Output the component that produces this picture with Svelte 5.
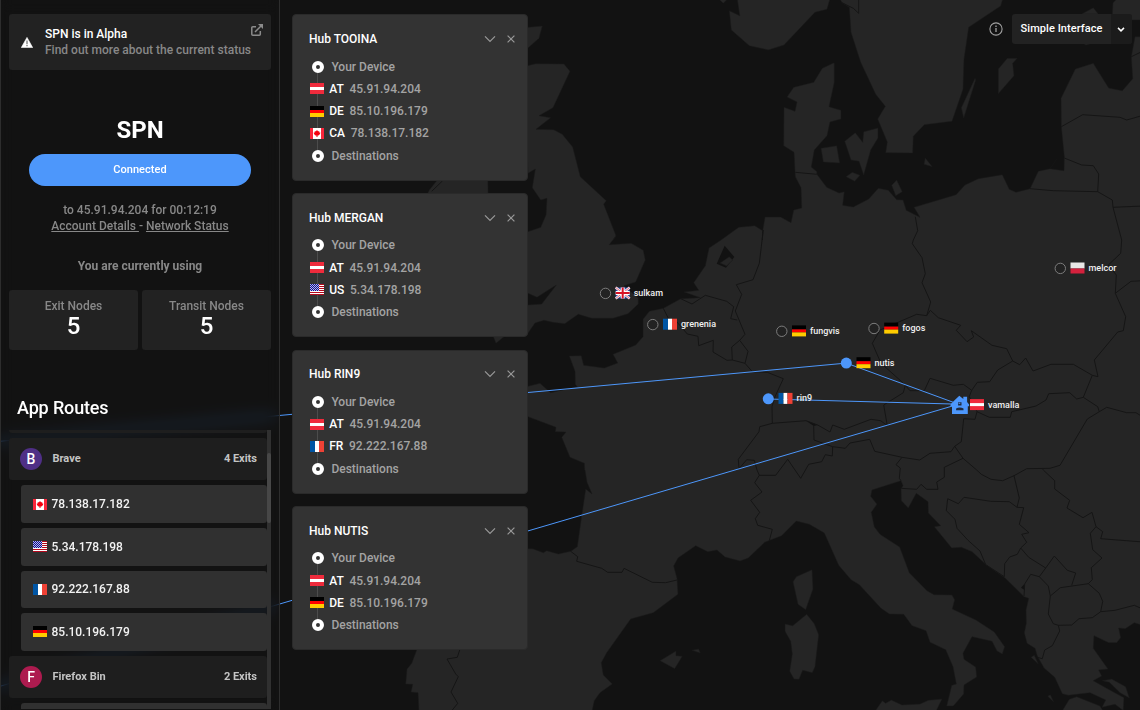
<script>
  const DETAIL = 3;
  const A = [520, 0], B = [820, 0], C = [520, 230], D = [820, 230];
  const E = [520, 470], F = [820, 470], G = [280, 490], H = [280, 190], K = [280, 0];

  // Joins runs of "x,y" pairs, each relative to its map tile origin.
  function run(...parts) {
    const out = [];
    for (const [origin, coords] of parts) {
      for (const pair of coords.trim().split(/\s+/)) {
        const [x, y] = pair.split(',').map(Number);
        out.push(`${(origin[0] + x / DETAIL).toFixed(1)},${(origin[1] + y / DETAIL).toFixed(1)}`);
      }
    }
    return out.join(' ');
  }

  const land = [
    run(
      [A, '942,188 907,205 881,247 821,262 801,291 831,306 825,334 792,322 791,437 822,457 826,530 843,563 845,624 821,630 813,668 782,651 735,651 728,692 704,677 656,682 603,720'],
      [C, '567,54 556,107 521,158 536,181 492,186 541,203 482,206 430,235 388,244 369,268 369,320 347,345 279,373 293,399 253,414 191,406 184,377 148,378 165,424 166,463 172,470 92,488 60,460 24,469 -60,500 -50,530 24,560 108,592 106,605 138,606 125,622 150,682 193,700 194,720'],
      [E, '195,0 201,37 216,72 197,57 185,137 172,230 152,244 115,252 80,242 70,248 38,236 24,236'],
      [G, '743,177 600,160 440,200 410,480 395,520 381,537 377,582 398,583 393,606 414,608 417,670'],
      [E, '215,730 223,692 240,668 277,642 250,615 244,578 260,548 332,447 400,428 474,373 471,325 461,288 474,264 527,227 563,245 591,240 615,261 660,273 685,264 734,217 785,197 829,153 868,163 913,189'],
      [F, '56,286 93,329 118,344 183,415 208,432 251,433 276,467 318,482 330,517 377,539 399,590 409,642 395,646 380,708 400,708 431,672 432,645 470,621 467,591 432,568 429,550 456,500 516,514 531,543 547,552 554,530 523,486 468,450 397,417 404,389 396,375 342,374 321,362 268,308 239,231 180,193 163,170 154,127 171,103 152,79 156,60 243,32 249,47 243,56 244,92 265,114 289,70 324,95 325,129 362,167 343,170 395,234 424,232 456,245 500,286 555,324 612,380 626,385 618,420 619,460 613,488 621,520 645,535 652,558 672,594 704,622 727,671 745,676 810,668 857,690 846,712 885,703 910,722 912,683 860,655 820,632 845,618 836,600 864,597 820,535 822,497 866,518 890,518 902,503 896,474 916,476 943,458 980,470'],
      [B, '980,110 945,110 934,170 938,236 907,272 866,264 820,190 766,207 723,295 724,380 733,470 732,512 690,506 655,514 630,566 588,577 568,568 547,524 475,536 435,555 408,584 282,622 300,652 259,631 249,600 230,599 205,571 175,565 146,597 100,621 68,616 73,575 57,579 20,562 -10,522 -9,515 -26,501 -17,450 21,407 30,366 63,357 63,331 27,320 43,247 43,188']
    ),
    run([A, '597,-2 610,10 622,-2']),
    run([A, '652,-3 659,47 628,32 634,90 688,137 745,150 792,135 885,37 921,28 930,-3']),
    run([B, '60,-3 66,8 88,22 93,97 122,187 167,283 196,319 173,357 202,426 197,458 278,459 280,409 313,374 396,364 429,268 432,178 446,82 542,18 548,-3']),
    run([B, '890,-3 879,8 876,60 970,60 970,-3']),
    run([B, '562,175 592,175 578,190 582,227 535,281 535,207']),
    run([B, '465,235 424,323 431,354 467,240']),
    run([B, '316,474 337,500 312,493']),
    run([B, '3,445 50,437 59,489 10,486']),
    run([B, '106,398 128,427 131,395 174,384 174,414 152,450 131,525 117,484 93,480 74,424']),
    run([B, '97,517 120,526 104,544 78,530']),
    run([B, '230,540 247,575 227,587 215,556']),
    run([B, '785,42 820,23 835,42']),
    run([B, '788,130 798,135 812,131']),
    run([A, '0,84 67,78 57,115 24,144 0,150']),
    run(
      [A, '10,200 47,191 132,192 150,214 99,323 57,347 92,353 48,388 101,389 127,403 158,441 181,530 259,602 251,613 288,707 280,720'],
      [C, '288,17 268,44 334,40 370,61 376,90 347,156 312,167 355,205 355,222 324,251 279,265 215,265 175,253 134,281 98,277 72,271 45,279 24,310'],
      [H, '743,434 672,440 648,460 640,440 700,370 743,345'],
      [C, '65,222 109,165 51,202 24,190'],
      [H, '700,300 690,140 743,125'],
      [A, '62,682 78,645 81,595 62,600 37,563 46,507 24,520']
    ),
    run([K, '500,500 470,542 448,570 443,580 430,620 625,620 623,500']),
    run([E, '876,299 879,357 857,419 834,403 819,335 829,320']),
    run([E, '860,433 883,461 896,494 885,590 877,608 848,601 837,628 822,627 809,604 817,552 812,514 795,484 795,462 818,467']),
    run([E, '420,572 468,543 468,557 487,559 464,596']),
    run([E, '516,541 536,537 541,549']),
    run([F, '165,724 187,692 197,700 214,690 246,705 300,702 325,691 366,687 348,724']),
    run([F, '726,724 748,688 770,680 840,708 850,724']),
    run([F, '847,632 875,627 917,650 928,684 900,668 868,637']),
    run([F, '633,562 643,556 655,582']),
    run([F, '683,679 691,674 701,696'])
  ];

  const water = [
    run([C, '614,47 643,81 618,113 590,101']),
    run([F, '603,353 613,342 614,360']),
    run([C, '858,572 893,585 881,588'])
  ];
  const polder = run([C, '628,80 638,90 620,108 600,99']);

  const borders = [
    run([B, '66,8 100,25 116,40 116,0']),
    run([A, '826,517 890,523']),
    run([A, '728,692 727,720']),
    run([C, '730,0 718,100 699,149 649,164 665,193 646,243 675,313 659,331 635,351 637,390 621,391 579,366 580,331 536,347 534,319 502,312 470,275 445,265 430,235']),
    run([C, '482,206 516,222 556,196 620,214 641,230 632,266 652,270']),
    run([C, '659,331 684,364 675,400 637,390']),
    run([C, '675,400 697,425 742,427 790,446 765,500 756,530 757,580 719,590 717,605 655,688 657,716 680,689 703,691 711,720'], [E, '718,16 704,38 726,66 692,91 719,127 706,146 713,166 757,178 748,212']),
    run([E, '718,16 767,16 803,-32 842,25 866,-17'], [C, '905,695 916,674 937,678 938,650'], [D, '76,655 90,639 149,628 164,664 246,682 299,690 330,670 393,665 404,649 424,635 431,566 465,568 471,545']),
    run([C, '757,580 858,572 893,585 930,606 938,585'], [D, '73,598 153,568 182,572 202,587 191,525 250,488 256,466 270,482 313,482 330,445 400,466 430,463 455,481 472,457 509,455 533,420 578,393']),
    run([C, '881,588 882,630 938,650']),
    run([B, '286,650 293,692 280,720'], [D, '277,41 306,83 316,131 306,158 332,216 320,257 290,253 180,300 157,340 183,400 245,455 256,466']),
    run([D, '320,257 331,241 355,263 422,286 409,301 441,335 461,321 454,302 516,346 560,356 578,393 599,404 617,384 639,423 693,403 760,403 817,436 834,440 823,390 893,306 910,302 917,260 886,190 889,135 865,105 902,70 905,30'], [B, '879,622 877,600 833,575 836,522 820,497 785,495 733,474']),
    run([B, '879,622 970,618']),
    run([B, '833,575 700,572 630,566']),
    run([B, '724,380 788,344 900,352 920,360 970,346']),
    run([B, '934,170 970,153']),
    run([B, '690,506 710,477']),
    run([D, '886,190 933,154 970,152']),
    run([D, '455,481 448,500 471,545 508,562 571,562 575,545 648,528 678,510 686,491 749,488 770,507 790,502 817,436']),
    run([D, '790,502 833,530 838,545 860,532 920,548 948,548 970,562']),
    run([D, '838,545 802,567 720,706 690,715 620,716'], [F, '582,17 548,32 513,28 484,13 470,0'], [D, '429,685 404,649']),
    run([D, '429,685 373,712'], [F, '373,22 350,36 354,58 320,58 303,43 290,58 244,55']),
    run([F, '243,32 238,25 241,-6 228,-16 246,-38']),
    run([F, '582,17 598,84 591,112 568,95 512,94 432,82 415,101 383,86 379,122 405,148 411,175 444,211 480,243 497,284']),
    run([F, '591,112 611,113 598,163 627,188 605,193 620,217 602,234 592,253 569,261 554,281 553,320 500,286']),
    run([F, '602,234 626,262 677,294 658,320 632,313 614,342 612,378']),
    run([F, '658,320 685,348 691,378 685,432 700,461 715,466 719,483 697,527 674,540 667,566 652,562']),
    run([F, '677,294 703,258 742,301 767,309 755,346']),
    run([F, '691,378 721,353 805,341 838,370 848,394 842,425 817,443 777,446 755,465 715,466']),
    run([F, '842,425 885,421 943,406 970,418']),
    run([F, '805,341 817,329 814,293 846,264 818,239 811,190 828,170 816,127 789,143 741,114 749,91 704,57 704,32 670,0'], [D, '668,718']),
    run([F, '828,170 848,185 842,206 970,216']),
    run([E, '152,244 173,260 170,274 245,295 263,307 306,307 312,295 397,337 437,338 471,330']),
    run([G, '539,480 532,502 501,507 527,552 535,560 513,606 533,640 517,660']),
    run([K, '488,542 455,574'])
  ];

  const pins = [
    { name: 'sulkam', cc: 'GB', x: 605.5, y: 293.4 },
    { name: 'grenenia', cc: 'FR', x: 652.8, y: 324.6 },
    { name: 'fungvis', cc: 'DE', x: 781.8, y: 331.3 },
    { name: 'fogos', cc: 'DE', x: 874, y: 328.5 },
    { name: 'melcor', cc: 'PL', x: 1060.3, y: 268.4 },
    { name: 'rin9', cc: 'FR', x: 768.3, y: 398.8, active: true },
    { name: 'nutis', cc: 'DE', x: 846.3, y: 363.1, active: true },
    { name: 'vamalla', cc: 'AT', x: 959.8, y: 405, home: true }
  ];

  const AT = { cc: 'AT', ip: '45.91.94.204' };
  const DE = { cc: 'DE', ip: '85.10.196.179' };
  const FR = { cc: 'FR', ip: '92.222.167.88' };
  const US = { cc: 'US', ip: '5.34.178.198' };
  const CA = { cc: 'CA', ip: '78.138.17.182' };

  const hubs = [
    { name: 'TOOINA', hops: [AT, DE, CA] },
    { name: 'MERGAN', hops: [AT, US] },
    { name: 'RIN9', hops: [AT, FR] },
    { name: 'NUTIS', hops: [AT, DE] }
  ];
  const braveExits = [CA, US, FR, DE];
</script>

{#snippet flag(cc)}
  {#if cc === 'AT'}
    <rect width="14" height="11" fill="#ef2b3c" /><rect y="4" width="14" height="3" fill="#fff" />
  {:else if cc === 'DE'}
    <rect width="14" height="4" fill="#000" /><rect y="4" width="14" height="3" fill="#f00" /><rect y="7" width="14" height="4" fill="#fc0" />
  {:else if cc === 'FR'}
    <rect width="5" height="11" fill="#0055a4" /><rect x="5" width="4" height="11" fill="#fff" /><rect x="9" width="5" height="11" fill="#ef4135" />
  {:else if cc === 'PL'}
    <rect width="14" height="6" fill="#e9e8e7" /><rect y="6" width="14" height="5" fill="#d4213d" />
  {:else if cc === 'CA'}
    <rect width="14" height="11" fill="#f9263b" /><rect x="3" width="8" height="11" fill="#fff" />
    <path shape-rendering="auto" d="M7 1.900l1 1.400h1.300v1.100l1.200.3-.9 1.700-1.200 1.200H7.500V9h-1V7.600H5.600L4.400 6.400l-.9-1.700 1.200-.3V3.300H6z" fill="#f5000f" />
  {:else if cc === 'US'}
    <rect width="14" height="11" fill="#fff" />
    {#each [0, 2, 4, 6, 8, 10] as y}<rect {y} width="14" height="1" fill="#b5081c" />{/each}
    <rect width="9" height="7" fill="#10108c" />
    {#each [0, 1, 2, 3, 4, 5, 6] as y}
      <path d="M{y % 2} {y + 0.5}H9" stroke="#b4b4ec" stroke-width="1" stroke-dasharray="1 1" />
    {/each}
  {:else if cc === 'GB'}
    <rect width="14" height="11" fill="#2a4aa5" />
    <path d="M0 0l14 11M14 0L0 11" stroke="#f3e6ee" stroke-width="2.4" />
    <path d="M0 0l14 11M14 0L0 11" stroke="#e05566" stroke-width=".8" />
    <path d="M7 0v11M0 5.500h14" stroke="#fff" stroke-width="4" />
    <path d="M7 0v11M0 5.500h14" stroke="#d81126" stroke-width="2" />
  {/if}
{/snippet}

{#snippet flagIcon(cc)}
  <svg class="flag" viewBox="0 0 14 11" shape-rendering="crispEdges">{@render flag(cc)}</svg>
{/snippet}

<div class="screen">
  <svg class="map" viewBox="0 0 1140 710">
    <g class="land">{#each land as points}<polygon {points} />{/each}</g>
    <g class="water">{#each water as points}<polygon {points} />{/each}</g>
    <polygon class="polder" points={polder} />
    <g class="borders">{#each borders as points}<polyline {points} />{/each}</g>
    <g class="glow">
      <polyline points="-10,442.200 272,416.200" />
      <polyline points="-10,689.200 272,606.200" />
    </g>
    <g class="lanes">
      <polyline points="0,441.300 846.300,363.100 959.300,404.500" />
      <polyline points="768.300,399 959.300,404.200" />
      <polyline points="0,686.300 959.300,404" />
    </g>
    {#each pins as pin}
      <g transform="translate({pin.x} {pin.y})">
        {#if pin.home}
          <path class="home" d="M-.5-9.300L3.500-6V-8.200H7.300V-3L9.300-.6V1.200H8V9H-7.800V1.200H-9.300V-.6L-5-5z" />
          <path d="M-1.700-2.800h3.400v3.400h-3.400zM-3.700 5.200V3.600q3.700-2.200 7.400 0v1.600z" fill="#202a3c" />
          <path d="M-1.200-2.200h1.700v1h-1.700z" fill="#4d97fb" />
        {:else if pin.active}
          <circle class="active" r="5.500" />
        {:else}
          <circle class="idle" r="5.200" />
        {/if}
        <g transform="translate(10.200 -5.900)">{@render flag(pin.cc)}</g>
        <text x="28.200" y={pin.active ? 2.4 : 2.8}>{pin.name}</text>
      </g>
    {/each}
  </svg>

  <aside>
    <section class="alpha">
      <svg class="warn" viewBox="0 0 12 11"><path d="M6 .4L11.700 10.600H.3z" fill="#fff" stroke="#fff" stroke-width=".6" stroke-linejoin="round" /><path d="M6 3.600v3.600M6 8v1.300" stroke="#777" stroke-width="1.300" /></svg>
      <p><b>SPN is in Alpha</b><br />Find out more about the current status</p>
      <svg class="ext" viewBox="0 0 12 12"><path d="M5 2.700H1.800Q.8 2.700.8 3.700v6.500q0 1 1 1h6.500q1 0 1-1V7M4 8L10.500 1.500" fill="none" stroke="#8b8b8b" stroke-width="1.500" /><path d="M7 0h5v5z" fill="#8b8b8b" /></svg>
    </section>

    <h1>SPN</h1>
    <button class="connect">Connected</button>
    <p class="status">to 45.91.94.204 for 00:12:19<br /><u>Account Details&nbsp;</u>- <u>Network Status</u></p>
    <p class="using">You are currently using</p>
    <div class="stats">
      <div><span>Exit Nodes</span><strong>5</strong></div>
      <div><span>Transit Nodes</span><strong>5</strong></div>
    </div>

    <h2>App Routes</h2>
    <div class="routes">
      <div class="list">
        <div class="app cut"></div>
        <div class="app"><i class="brave">B</i><span>Brave</span><em>4 Exits</em></div>
        {#each braveExits as exit}
          <div class="exit">{@render flagIcon(exit.cc)}{exit.ip}</div>
        {/each}
        <div class="app"><i class="firefox">F</i><span>Firefox Bin</span><em>2 Exits</em></div>
        <div class="exit"></div>
      </div>
      <div class="track"><div class="thumb"></div></div>
    </div>
  </aside>

  <main>
    {#each hubs as hub}
      <article>
        <header>
          <h3>Hub {hub.name}</h3>
          <svg class="chev" viewBox="0 0 12 8"><path d="M1 1.300l5 5 5-5" /></svg>
          <svg class="close" viewBox="0 0 8 8"><path d="M.6.600l6.800 6.800M7.400.600L.6 7.400" /></svg>
        </header>
        <ol>
          <li><i></i><span class="end">Your Device</span></li>
          {#each hub.hops as hop}
            <li>{@render flagIcon(hop.cc)}<b>{hop.cc}</b><span>{hop.ip}</span></li>
          {/each}
          <li><i></i><span class="end">Destinations</span></li>
        </ol>
      </article>
    {/each}
  </main>

  <nav>
    <svg viewBox="0 0 14 14" fill="none" stroke="#a0a0a0"><circle cx="7" cy="7" r="6.100" stroke-width="1.100" /><path d="M7 6.100v4M7 3.600v1.400" stroke-width="1.300" /></svg>
    <div class="mode"><span>Simple Interface</span><div><svg viewBox="0 0 8 5"><path d="M1 .9l3 3 3-3" fill="none" stroke="#fff" stroke-width="1.500" /></svg></div></div>
  </nav>
</div>

<style>
  :global(body) { margin: 0; background: #121212; }
  .screen {
    position: relative;
    width: 1140px;
    height: 710px;
    overflow: hidden;
    display: flex;
    background: #121212;
    font: 500 12px/16px Roboto, sans-serif;
    color: #fff;
  }
  p, h1, h2, h3, ol { margin: 0; padding: 0; font-weight: 500; }
  i, em { font-style: normal; }
  b { font-weight: 500; color: #fff; }

  .map { position: absolute; inset: 0; width: 1140px; height: 710px; }
  .land, .polder { fill: #252525; stroke: #1b1b1b; stroke-width: .5; }
  .water { fill: #121212; }
  .borders { fill: none; stroke: #151515; stroke-width: 1; }
  .lanes { fill: none; stroke: #4d97fb; stroke-width: 1; }
  .glow { fill: none; stroke: #4d97fb; stroke-width: 14; opacity: .09; filter: blur(3px); }
  .idle { fill: #222; stroke: #7d7d7d; }
  .active, .home { fill: #4d97fb; }
  .map text { font-size: 9px; fill: #f0f0f0; }

  aside {
    position: relative;
    box-sizing: border-box;
    width: 280px;
    height: 710px;
    padding: 14px 8px 1px;
    border: solid #2d2d2d;
    border-width: 0 1px;
    background: rgba(18, 18, 18, .55);
    backdrop-filter: blur(7px);
    display: flex;
    flex-direction: column;
    color: #888;
  }
  .alpha {
    display: flex;
    align-items: center;
    height: 56px;
    border-radius: 3px;
    background: #222;
    padding: 0 8px 0 12px;
    box-sizing: border-box;
  }
  .warn { width: 12px; height: 11px; margin-right: 12px; }
  .alpha p { flex: 1; white-space: nowrap; }
  .ext { width: 12px; height: 12px; margin: 0 0 25px -12px; }
  h1 { margin-top: 46px; font-size: 24px; line-height: 28px; font-weight: 700; text-align: center; color: #fff; }
  .connect {
    height: 32px;
    margin: 10px 20px 0;
    border: 0;
    border-radius: 16px;
    background: #4d97fb;
    color: #fff;
    font: 500 11px/30px Roboto, sans-serif;
    letter-spacing: .05px;
    padding: 0;
    flex: none;
  }
  .status { margin-top: 16px; text-align: center; }
  .using { margin-top: 24px; text-align: center; font-weight: 700; }
  .stats { display: flex; gap: 4px; margin-top: 16px; }
  .stats div {
    flex: 1;
    height: 60px;
    box-sizing: border-box;
    padding-top: 8px;
    border-radius: 3px;
    background: #222;
    display: flex;
    flex-direction: column;
    align-items: center;
  }
  .stats strong { font-size: 24px; line-height: 24px; font-weight: 500; color: #fff; }
  h2 { margin: 46px 0 0 8px; font-size: 18px; line-height: 24px; letter-spacing: -.15px; color: #fff; }
  .routes { flex: 1; min-height: 0; margin-top: 10px; display: flex; overflow: hidden; }
  .list { flex: 1; display: flex; flex-direction: column; gap: 5px; }
  .app, .exit { flex: none; display: flex; align-items: center; box-sizing: border-box; border-radius: 3px; }
  .app { height: 42.400px; padding: 0 10px 0 11px; background: #1e1e1e; font-size: 11px; font-weight: 700; color: #c4c4c4; }
  .app.cut { height: 3px; border-radius: 0 0 3px 3px; }
  .app i {
    width: 22px;
    height: 22px;
    margin-right: 10.500px;
    border-radius: 50%;
    font: 500 14px/22px Roboto, sans-serif;
    text-align: center;
    color: #fff;
  }
  .app span { flex: 1; }
  .brave { background: #4f2f86; }
  .firefox { background: #ad1b4f; }
  .exit { height: 37.600px; margin-left: 12px; padding-left: 12px; background: #303030; color: #f2f2f2; }
  .flag { flex: none; width: 14px; height: 11px; }
  .exit .flag { margin-right: 4.500px; }
  .track { width: 4px; background: #303030; }
  .thumb { height: 70px; margin-top: 23px; border-radius: 2px; background: #474747; }

  main { position: relative; padding: 14.300px 0 0 12px; display: flex; flex-direction: column; gap: 12.500px; }
  article {
    width: 236px;
    box-sizing: border-box;
    padding: 15.600px 12px 12.700px 16px;
    border: 1px solid #2a2a2a;
    border-radius: 4px;
    background: #333;
  }
  header { display: flex; align-items: center; height: 16px; margin-bottom: 8.500px; }
  h3 { flex: 1; font-size: 12px; }
  header svg { fill: none; stroke: #999; stroke-width: 1.200; }
  .chev { width: 12px; height: 8px; margin-right: 11.500px; }
  .close { width: 8px; height: 8px; }
  ol { list-style: none; color: #a3a3a3; background: linear-gradient(#4c4c4c, #4c4c4c) 8px 12px / 1px 80% no-repeat; }
  li { display: flex; align-items: center; height: 22.300px; padding-left: 1px; }
  li i { box-sizing: border-box; width: 12px; height: 12px; margin: 0 7.400px 0 2px; border: 4px solid #fff; border-radius: 50%; background: #333; }
  li b { margin: 0 5.700px 0 5.200px; }

  nav { position: absolute; right: 8px; top: 14px; display: flex; align-items: center; gap: 9px; }
  nav > svg { width: 14px; height: 14px; }
  .mode { display: flex; height: 30px; border-radius: 3px; background: #222; overflow: hidden; font-size: 11px; font-weight: 500; letter-spacing: .06px; line-height: 29px; }
  .mode span { width: 99px; text-align: center; }
  .mode div { box-sizing: border-box; width: 21px; padding-right: 2px; background: #1b1b1b; display: flex; align-items: center; justify-content: center; }
  .mode svg { width: 8px; height: 5px; }
</style>
